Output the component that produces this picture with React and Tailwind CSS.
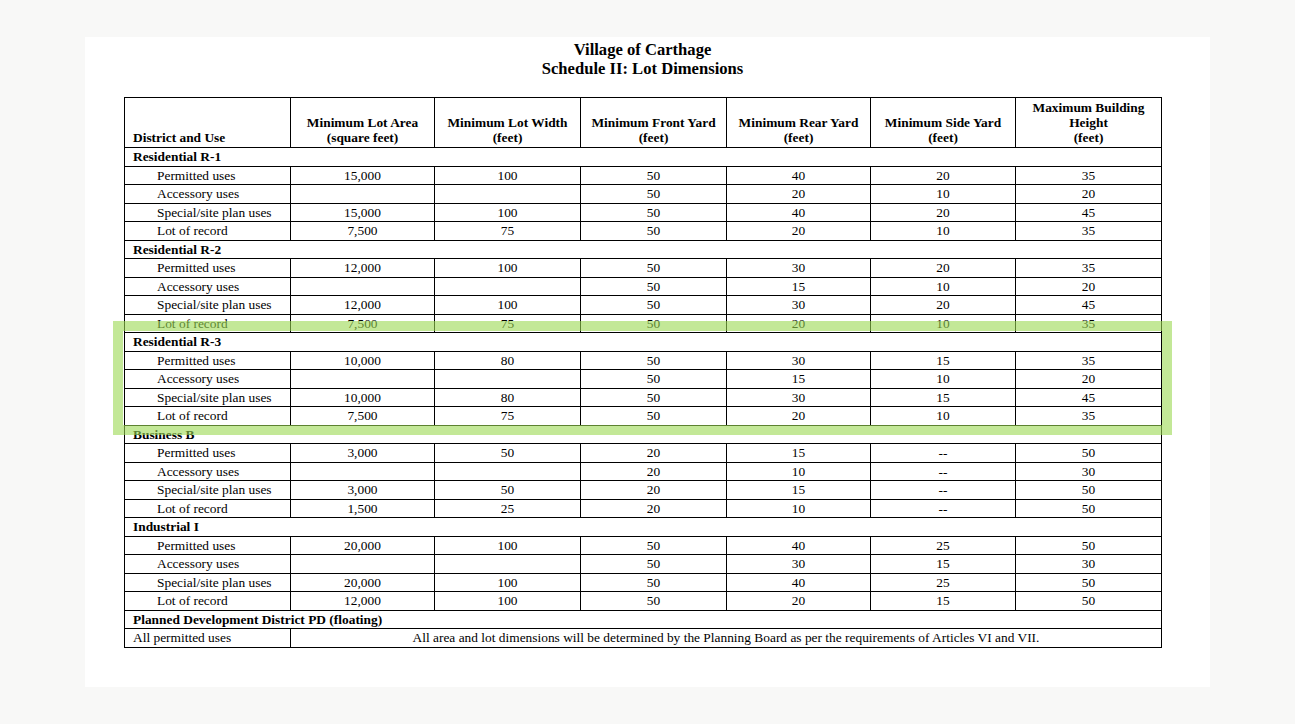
import React from "react";

const groups = [
  {
    name: "Residential R-1",
    rows: [
      ["Permitted uses", "15,000", "100", "50", "40", "20", "35"],
      ["Accessory uses", "", "", "50", "20", "10", "20"],
      ["Special/site plan uses", "15,000", "100", "50", "40", "20", "45"],
      ["Lot of record", "7,500", "75", "50", "20", "10", "35"],
    ],
  },
  {
    name: "Residential R-2",
    rows: [
      ["Permitted uses", "12,000", "100", "50", "30", "20", "35"],
      ["Accessory uses", "", "", "50", "15", "10", "20"],
      ["Special/site plan uses", "12,000", "100", "50", "30", "20", "45"],
      ["Lot of record", "7,500", "75", "50", "20", "10", "35"],
    ],
  },
  {
    name: "Residential R-3",
    rows: [
      ["Permitted uses", "10,000", "80", "50", "30", "15", "35"],
      ["Accessory uses", "", "", "50", "15", "10", "20"],
      ["Special/site plan uses", "10,000", "80", "50", "30", "15", "45"],
      ["Lot of record", "7,500", "75", "50", "20", "10", "35"],
    ],
  },
  {
    name: "Business B",
    rows: [
      ["Permitted uses", "3,000", "50", "20", "15", "--", "50"],
      ["Accessory uses", "", "", "20", "10", "--", "30"],
      ["Special/site plan uses", "3,000", "50", "20", "15", "--", "50"],
      ["Lot of record", "1,500", "25", "20", "10", "--", "50"],
    ],
  },
  {
    name: "Industrial I",
    rows: [
      ["Permitted uses", "20,000", "100", "50", "40", "25", "50"],
      ["Accessory uses", "", "", "50", "30", "15", "30"],
      ["Special/site plan uses", "20,000", "100", "50", "40", "25", "50"],
      ["Lot of record", "12,000", "100", "50", "20", "15", "50"],
    ],
  },
];

const headers = [
  ["Minimum Lot Area", "(square feet)"],
  ["Minimum Lot Width", "(feet)"],
  ["Minimum Front Yard", "(feet)"],
  ["Minimum Rear Yard", "(feet)"],
  ["Minimum Side Yard", "(feet)"],
  ["Maximum Building", "Height", "(feet)"],
];

const widths = ["w-[166px]", "w-[144px]", "w-[146px]", "w-[146px]", "w-[144px]", "w-[145px]", "w-[146px]"];

export default function App() {
  return (
    <div
      className="w-full h-[724px] bg-[#f8f8f7] pt-[37px] pl-[85px] text-black"
      style={{ fontFamily: '"Liberation Serif", "Times New Roman", serif' }}
    >
      <div className="relative w-[1125px] h-[650px] bg-white pl-[39px] pt-[3px]">
        <div className="w-[1037px] text-center font-bold text-[16.6px] leading-[19px]">
          <div>Village of Carthage</div>
          <div>Schedule II: Lot Dimensions</div>
        </div>

        <table className="mt-[19px] w-[1037px] table-fixed border-collapse border border-black text-[13.4px] leading-[15px]">
          <colgroup>
            {widths.map((w, i) => (
              <col key={i} className={w} />
            ))}
          </colgroup>
          <thead>
            <tr className="h-[50px]">
              <th className="border border-black align-bottom text-left font-bold pl-[8px] pb-[2px]">
                District and Use
              </th>
              {headers.map((h, i) => (
                <th key={i} className="border border-black align-bottom text-center font-bold pb-[2px]">
                  {h.map((line, j) => (
                    <div key={j}>{line}</div>
                  ))}
                </th>
              ))}
            </tr>
          </thead>
          <tbody>
            {groups.map((g) => (
              <React.Fragment key={g.name}>
                <tr className="h-[18.5px]">
                  <td colSpan={7} className="border border-black font-bold pl-[8px] p-0">
                    {g.name}
                  </td>
                </tr>
                {g.rows.map((r, i) => (
                  <tr key={i} className="h-[18.5px]">
                    <td className="border border-black pl-[32px] p-0">{r[0]}</td>
                    {r.slice(1).map((v, j) => (
                      <td key={j} className="border border-black text-center p-0">
                        {v}
                      </td>
                    ))}
                  </tr>
                ))}
              </React.Fragment>
            ))}
            <tr className="h-[18.5px]">
              <td colSpan={7} className="border border-black font-bold pl-[8px] p-0">
                Planned Development District PD (floating)
              </td>
            </tr>
            <tr className="h-[18.5px]">
              <td className="border border-black pl-[8px] p-0">All permitted uses</td>
              <td colSpan={6} className="border border-black text-center p-0">
                All area and lot dimensions will be determined by the Planning Board as per the requirements of Articles VI and VII.
              </td>
            </tr>
          </tbody>
        </table>

        {/* highlight box over the R-3 block */}
        <div className="absolute left-[28px] top-[284px] w-[1059px] h-[114px] border-[10px] border-[#9bd952]/60 pointer-events-none" />
      </div>
    </div>
  );
}
